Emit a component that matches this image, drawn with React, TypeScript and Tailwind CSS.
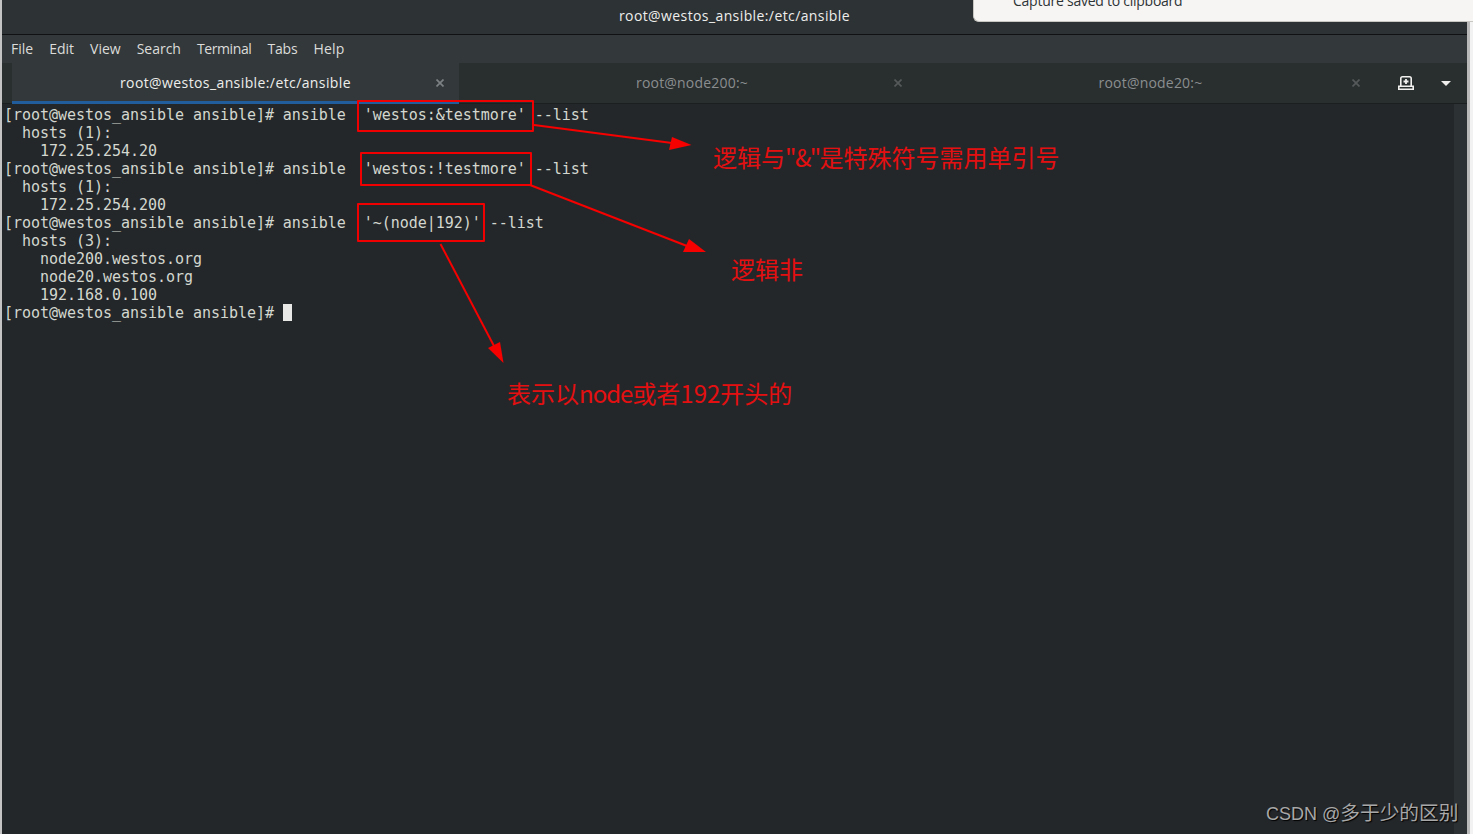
import React from "react";

const menus = [
  { label: "File", cls: "" },
  { label: "Edit", cls: "" },
  { label: "View", cls: "" },
  { label: "Search", cls: "" },
  { label: "Terminal", cls: "tracking-[-0.4px]" },
  { label: "Tabs", cls: "tracking-[-0.2px]" },
  { label: "Help", cls: "tracking-[0.2px]" },
];

const lines = [
  "[root@westos_ansible ansible]# ansible  'westos:&testmore' --list",
  "  hosts (1):",
  "    172.25.254.20",
  "[root@westos_ansible ansible]# ansible  'westos:!testmore' --list",
  "  hosts (1):",
  "    172.25.254.200",
  "[root@westos_ansible ansible]# ansible  '~(node|192)' --list",
  "  hosts (3):",
  "    node200.westos.org",
  "    node20.westos.org",
  "    192.168.0.100",
];

function Close({ className }: { className: string }) {
  return (
    <svg width="8" height="8" viewBox="0 0 8 8" className={className}>
      <path d="M0.5 0.5L7.5 7.5M7.5 0.5L0.5 7.5" stroke="currentColor" strokeWidth="1.7" fill="none" />
    </svg>
  );
}

export default function App() {
  return (
    <div
      className="relative flex h-[834px] w-[1473px] overflow-hidden bg-[#d8d8d8]"
      style={{ fontFamily: '"Open Sans", "Noto Sans", sans-serif' }}
    >
      <div className="w-[2px] shrink-0 bg-[#c4c4c4]" />
      <div className="flex h-full w-[1465px] shrink-0 flex-col bg-[#24272a]">
        <div className="flex h-[34px] shrink-0 items-center justify-center bg-[#2d3235] pb-[3px] text-[14px] font-medium tracking-[0.4px] text-[#eeeeec]">
          root@westos_ansible:/etc/ansible
        </div>
        <div className="h-px shrink-0 bg-[#0f1112]" />
        <div className="flex h-[28px] shrink-0 items-center gap-[16px] bg-[#33393b] pb-[2px] pl-[9px] text-[14px] text-[#dcdcda]">
          {menus.map((m) => (
            <span key={m.label} className={m.cls}>
              {m.label}
            </span>
          ))}
        </div>
        <div className="flex h-[41px] shrink-0 items-center border-b border-[#1c1f20] bg-[#292e2f] pl-[10px] text-[14px]">
          <div className="relative flex h-[41px] w-[447px] items-center justify-center self-start border-b-[3px] border-[#215d9c] bg-[#33393b] font-medium tracking-[0.4px] text-[#eeeeec]">
            <span>root@westos_ansible:/etc/ansible</span>
            <Close className="absolute right-[15px] top-[16px] text-[#7d8183]" />
          </div>
          <div className="relative flex h-full w-[462px] items-center justify-center pb-[2px] pl-[4px] tracking-[0.2px] text-[#8b8e8f]">
            <span>root@node200:~</span>
            <Close className="absolute right-[19px] top-[16px] text-[#55595a]" />
          </div>
          <div className="relative flex h-full w-[459px] items-center justify-center pb-[2px] tracking-[0.2px] text-[#8b8e8f]">
            <span>root@node20:~</span>
            <Close className="absolute right-[20px] top-[16px] text-[#55595a]" />
          </div>
          <div className="flex h-full flex-1 items-center">
            <svg width="16" height="14" viewBox="0 0 16 14" className="ml-[18px] text-[#f0f0ee]">
              <path
                d="M2.800 9.500V2.500Q2.800 0.800 4.500 0.800H11.500Q13.200 0.800 13.200 2.500V9.500M0.800 13.200V10.200H15.200V13.200Z"
                fill="none"
                stroke="currentColor"
                strokeWidth="1.6"
              />
              <path d="M8 3v5M5.500 5.500h5" stroke="currentColor" strokeWidth="1.8" />
            </svg>
            <svg width="10" height="5" viewBox="0 0 10 5" className="ml-[27px] text-[#eeeeec]">
              <path d="M0 0h10L5 5z" fill="currentColor" />
            </svg>
          </div>
        </div>
        <div className="flex min-h-0 flex-1">
          <div
            className="flex-1 pl-[2px] pt-[2px] text-[15px] leading-[18px] tracking-[-0.035px] text-[#d3d7cf]"
            style={{ fontFamily: '"DejaVu Sans Mono", monospace' }}
          >
            {lines.map((l, i) => (
              <div key={i} className="h-[18px] whitespace-pre">
                {l}
              </div>
            ))}
            <div className="flex h-[18px] whitespace-pre">
              <span>{"[root@westos_ansible ansible]# "}</span>
              <span className="h-[17px] w-[9px] bg-[#e8e8e6]" />
            </div>
          </div>
          <div className="w-[13px] shrink-0 bg-[#2c3133]" />
        </div>
      </div>
      <div className="w-[3px] shrink-0 bg-[#b9b9b9]" />
      <div className="w-[3px] shrink-0 bg-[#f2f2f2]" />

      {/* notification banner */}
      <div className="absolute left-[973px] top-[-10px] flex h-[32px] w-[500px] items-end rounded-bl-[6px] border-b border-l border-[#c9c7c2] bg-[#f6f5f4] pb-[11px] pl-[39px] text-[14px] leading-[18px] tracking-[-0.25px] text-[#2e3436]">
        Capture saved to clipboard
      </div>

      {/* red annotations */}
      <div className="absolute left-[357px] top-[100px] h-[32px] w-[177px] rounded-[1px] border-2 border-[#f00000]" />
      <div className="absolute left-[360px] top-[152px] h-[34px] w-[172px] rounded-[1px] border-2 border-[#f00000]" />
      <div className="absolute left-[357px] top-[203px] h-[39px] w-[128px] rounded-[1px] border-2 border-[#f00000]" />
      <svg className="absolute left-0 top-0" width="1473" height="834" viewBox="0 0 1473 834">
        <g stroke="#f60000" strokeWidth="2" fill="none">
          <path d="M534 125L672 143" />
          <path d="M530 185L687 246" />
          <path d="M440.500 244L494 346" />
        </g>
        <g fill="#f60000" stroke="none">
          <path d="M691.500 145L672 137L669 150Z" />
          <path d="M706 252L689 239L683 252Z" />
          <path d="M503.500 363L500 342L488 348Z" />
        </g>
      </svg>
      <div
        className="absolute left-[713px] top-[139px] whitespace-nowrap text-[24px] leading-[35px] text-[#e40f10]"
        style={{ fontFamily: '"Noto Sans CJK SC", sans-serif' }}
      >
        逻辑与<span className="tracking-[-1.5px]">"&amp;"</span>是特殊符号需用单引号
      </div>
      <div
        className="absolute left-[731px] top-[251px] whitespace-nowrap text-[24px] leading-[35px] text-[#e40f10]"
        style={{ fontFamily: '"Noto Sans CJK SC", sans-serif' }}
      >
        逻辑非
      </div>
      <div
        className="absolute left-[507px] top-[375px] whitespace-nowrap text-[24px] leading-[35px] text-[#e40f10]"
        style={{ fontFamily: '"Noto Sans CJK SC", sans-serif' }}
      >
        表示以<span className="tracking-[-1px]">node</span>或者192开头的
      </div>
      <div
        className="absolute left-[1266px] top-[799px] whitespace-nowrap text-[18px] leading-[28px] text-[#a8a8a8] [text-shadow:1px_1px_1px_#000]"
        style={{ fontFamily: '"Liberation Sans", "Noto Sans CJK SC", sans-serif' }}
      >
        CSDN @<span className="text-[19.7px]">多于少的区别</span>
      </div>
    </div>
  );
}
